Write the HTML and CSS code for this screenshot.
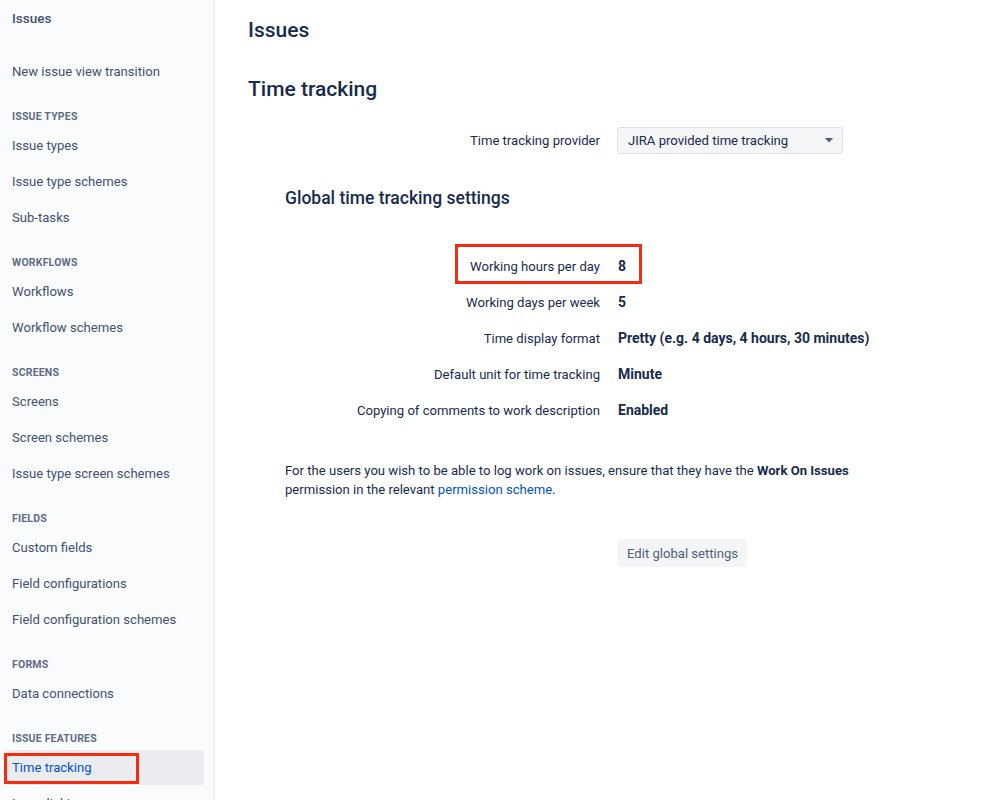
FILE: index.html
```html
<!DOCTYPE html>
<html>
<head>
<meta charset="utf-8">
<link rel="stylesheet" href="styles.css">
</head>
<body>
<div class="page">
  <nav class="sidebar">
    <div class="side-title">Issues</div>
    <div class="group first">
      <a class="item">New issue view transition</a>
    </div>
    <div class="group">
      <div class="group-head">Issue types</div>
      <a class="item">Issue types</a>
      <a class="item">Issue type schemes</a>
      <a class="item">Sub-tasks</a>
    </div>
    <div class="group">
      <div class="group-head">Workflows</div>
      <a class="item">Workflows</a>
      <a class="item">Workflow schemes</a>
    </div>
    <div class="group">
      <div class="group-head">Screens</div>
      <a class="item">Screens</a>
      <a class="item">Screen schemes</a>
      <a class="item">Issue type screen schemes</a>
    </div>
    <div class="group">
      <div class="group-head">Fields</div>
      <a class="item">Custom fields</a>
      <a class="item">Field configurations</a>
      <a class="item">Field configuration schemes</a>
    </div>
    <div class="group">
      <div class="group-head">Forms</div>
      <a class="item">Data connections</a>
    </div>
    <div class="group">
      <div class="group-head">Issue features</div>
      <a class="item selected"><span class="mark-side"></span>Time tracking</a>
      <a class="item">Issue linking</a>
    </div>
  </nav>
  <main class="main">
    <h1 class="h1">Issues</h1>
    <h2 class="h2">Time tracking</h2>
    <div class="row provider">
      <div class="label">Time tracking provider</div>
      <div class="value">
        <div class="select">
          <span>JIRA provided time tracking</span>
          <svg class="caret" width="8" height="5" viewBox="0 0 8 5"><path d="M0 0h8L4 4.5z" fill="#505F79"/></svg>
        </div>
      </div>
    </div>
    <h3 class="h3">Global time tracking settings</h3>
    <div class="settings">
      <div class="row"><div class="label">Working hours per day</div><div class="value strong">8</div><span class="mark-main"></span></div>
      <div class="row"><div class="label">Working days per week</div><div class="value strong">5</div></div>
      <div class="row"><div class="label">Time display format</div><div class="value strong">Pretty (e.g. 4 days, 4 hours, 30 minutes)</div></div>
      <div class="row"><div class="label">Default unit for time tracking</div><div class="value strong">Minute</div></div>
      <div class="row"><div class="label">Copying of comments to work description</div><div class="value strong">Enabled</div></div>
    </div>
    <p class="note">For the users you wish to be able to log work on issues, ensure that they have the <b>Work On Issues</b> permission in the relevant <a class="link">permission scheme</a>.</p>
    <div class="row actions">
      <div class="label"></div>
      <div class="value"><button class="btn">Edit global settings</button></div>
    </div>
  </main>
</div>
</body>
</html>
```
FILE: styles.css
```css
* { box-sizing: border-box; }
html, body { margin: 0; padding: 0; background: #fff; }
body {
  font-family: Roboto, "Liberation Sans", Arial, sans-serif;
  font-size: 13.1px;
  color: #172B4D;
  height: 800px;
  overflow: hidden;
}
.page { display: flex; height: 800px; }
.sidebar {
  width: 215px;
  flex: none;
  background: #FAFBFC;
  border-right: 2px solid #EEF0F3;
  padding: 0 9px 0 6px;
}
.side-title {
  height: 36px;
  line-height: 36px;
  padding-left: 6px;
  font-weight: 500;
  color: #42526E;
  font-size: 13.5px;
}
.group { display: flex; flex-direction: column; }
.group.first { margin-top: 18px; }
.group-head {
  height: 24px;
  line-height: 25px;
  margin-top: 14px;
  padding-left: 6px;
  font-size: 10.5px;
  font-weight: bold;
  text-transform: uppercase;
  color: #5E6C84;
  letter-spacing: 0.2px;
}
.item {
  position: relative;
  height: 36px;
  line-height: 36px;
  padding-left: 6px;
  color: #42526E;
  border-radius: 3px;
}
.item.selected { background: #EBECF0; color: #0052CC; height: 35px; line-height: 35px; margin-bottom: 1px; }
.mark-side {
  position: absolute;
  left: -2px;
  top: 3px;
  width: 135px;
  height: 31px;
  border: 3px solid #F52B0E;
}
.main { flex: 1; padding-left: 33px; }
.h1 {
  margin: 0;
  padding-top: 16px;
  height: 60px;
  font-size: 21px;
  font-weight: 500;
  line-height: 28px;
  color: #172B4D;
}
.h2 {
  margin: 0;
  height: 60px;
  padding-top: 15px;
  font-size: 21px;
  font-weight: 500;
  line-height: 28px;
}
.row {
  position: relative;
  display: flex;
  align-items: center;
  height: 36px;
}
.label {
  width: 352px;
  text-align: right;
  color: #172B4D;
  flex: none;
}
.value { margin-left: 18px; }
.strong { font-weight: bold; font-size: 14px; }
.provider { height: 40px; }
.select {
  width: 226px;
  height: 27px;
  background: #F4F5F7;
  border: 1px solid #DFE1E6;
  border-radius: 3px;
  display: flex;
  align-items: center;
  justify-content: space-between;
  padding: 0 9px 0 10px;
  margin-left: -1px;
  color: #172B4D;
}
.caret { margin-top: 1px; }
.h3 {
  margin: 0;
  padding: 26px 0 0 37px;
  height: 88px;
  font-size: 17.5px;
  font-weight: 500;
  line-height: 24px;
  color: #172B4D;
}
.settings { display: flex; flex-direction: column; }
.mark-main {
  position: absolute;
  left: 207px;
  top: -4px;
  width: 187px;
  height: 40px;
  border: 3px solid #F52B0E;
}
.note {
  margin: 33px 0 0 37px;
  width: 590px;
  line-height: 19px;
  color: #172B4D;
}
.note b { font-weight: bold; }
.link { color: #0052CC; }
.actions { margin-top: 40px; height: 28px; }
.btn {
  font-family: inherit;
  font-size: 13.1px;
  color: #505F79;
  background: #F4F5F7;
  border: none;
  border-radius: 3px;
  height: 28px;
  padding: 0 9px;
}
```
